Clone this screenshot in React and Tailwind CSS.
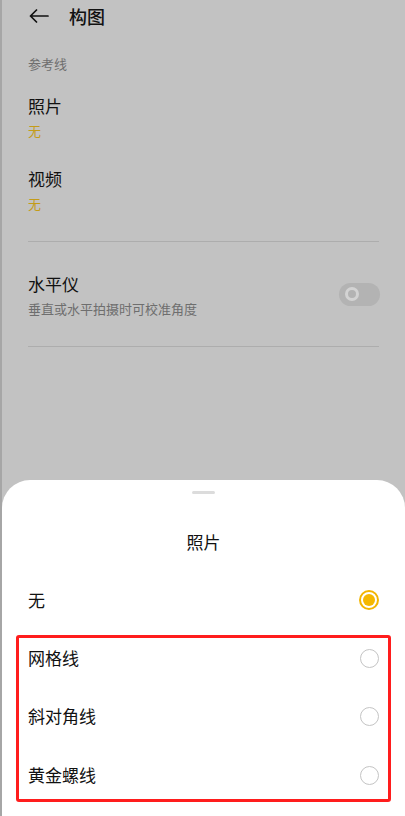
import React from "react";

const font = { fontFamily: '"Noto Sans CJK SC", "Noto Sans", sans-serif' };

function Radio({ checked }) {
  if (checked) {
    return (
      <div className="w-[20px] h-[20px] rounded-full border-2 border-[#f3b500] flex items-center justify-center">
        <div className="w-[12px] h-[12px] rounded-full bg-[#f5b800]" />
      </div>
    );
  }
  return <div className="w-[19px] h-[19px] rounded-full border-[1.5px] border-[#c4c4c4]" />;
}

export default function App() {
  const options = ["网格线", "斜对角线", "黄金螺线"];

  return (
    <div
      className="w-[405px] h-[816px] flex flex-col bg-[#c2c2c2] border-l-2 border-[#a6a6a6] overflow-hidden"
      style={font}
    >
      {/* Settings page (dimmed) */}
      <div className="flex-1 px-[26px]">
        <div className="h-[32px] flex items-center">
          <svg width="20" height="14" viewBox="0 0 20 14" fill="none" stroke="#111" strokeWidth="1.7" strokeLinecap="round" strokeLinejoin="round" className="ml-[1px]">
            <path d="M19 7H1.5M7.5 1L1.5 7l6 6" />
          </svg>
          <h1 className="ml-[20px] text-[18px] font-medium text-[#111] leading-[24px]">构图</h1>
        </div>

        <p className="mt-[22px] text-[13px] leading-[20px] text-[#6e6e6e]">参考线</p>

        <p className="mt-[20px] text-[17px] leading-[24px] text-[#111]">照片</p>
        <p className="mt-[4px] text-[13px] leading-[18px] text-[#c49c18]">无</p>

        <p className="mt-[27px] text-[17px] leading-[24px] text-[#111]">视频</p>
        <p className="mt-[4px] text-[13px] leading-[18px] text-[#c49c18]">无</p>

        <div className="mt-[28px] h-px bg-[#adadad]" />

        <div className="flex items-center justify-between">
          <div>
            <p className="mt-[30px] text-[17px] leading-[24px] text-[#111]">水平仪</p>
            <p className="mt-[4px] text-[13px] leading-[18px] text-[#6e6e6e]">垂直或水平拍摄时可校准角度</p>
          </div>
          <div className="mt-[28px] mr-[-1px] w-[41px] h-[23px] rounded-full bg-[#b3b3b3] flex items-center pl-[6px]">
            <div className="w-[14px] h-[14px] rounded-full border-[3px] border-[#d3d3d3]" />
          </div>
        </div>

        <div className="mt-[28px] h-px bg-[#adadad]" />
      </div>

      {/* Bottom sheet */}
      <div className="h-[336px] bg-white rounded-t-[28px] flex flex-col">
        <div className="pt-[11px] flex justify-center">
          <div className="w-[23px] h-[3px] rounded-full bg-[#dcdcdc]" />
        </div>
        <p className="mt-[36px] text-center text-[17px] leading-[24px] text-[#111]">照片</p>

        <div className="mt-[26px] h-[40px] px-[26px] flex items-center justify-between">
          <span className="text-[17px] text-[#111]">无</span>
          <Radio checked />
        </div>

        <div className="mt-[15px] mx-[14px] border-[3px] border-[#ff1d1d] rounded-[3px] pb-[4px] flex flex-col gap-[18px]">
          {options.map((label, i) => (
            <div
              key={label}
              className={`h-[40px] pl-[9px] pr-[9px] flex items-center justify-between ${i === 2 ? "mt-[1px]" : ""}`}
            >
              <span className="text-[17px] text-[#111]">{label}</span>
              <Radio />
            </div>
          ))}
        </div>
      </div>
    </div>
  );
}
